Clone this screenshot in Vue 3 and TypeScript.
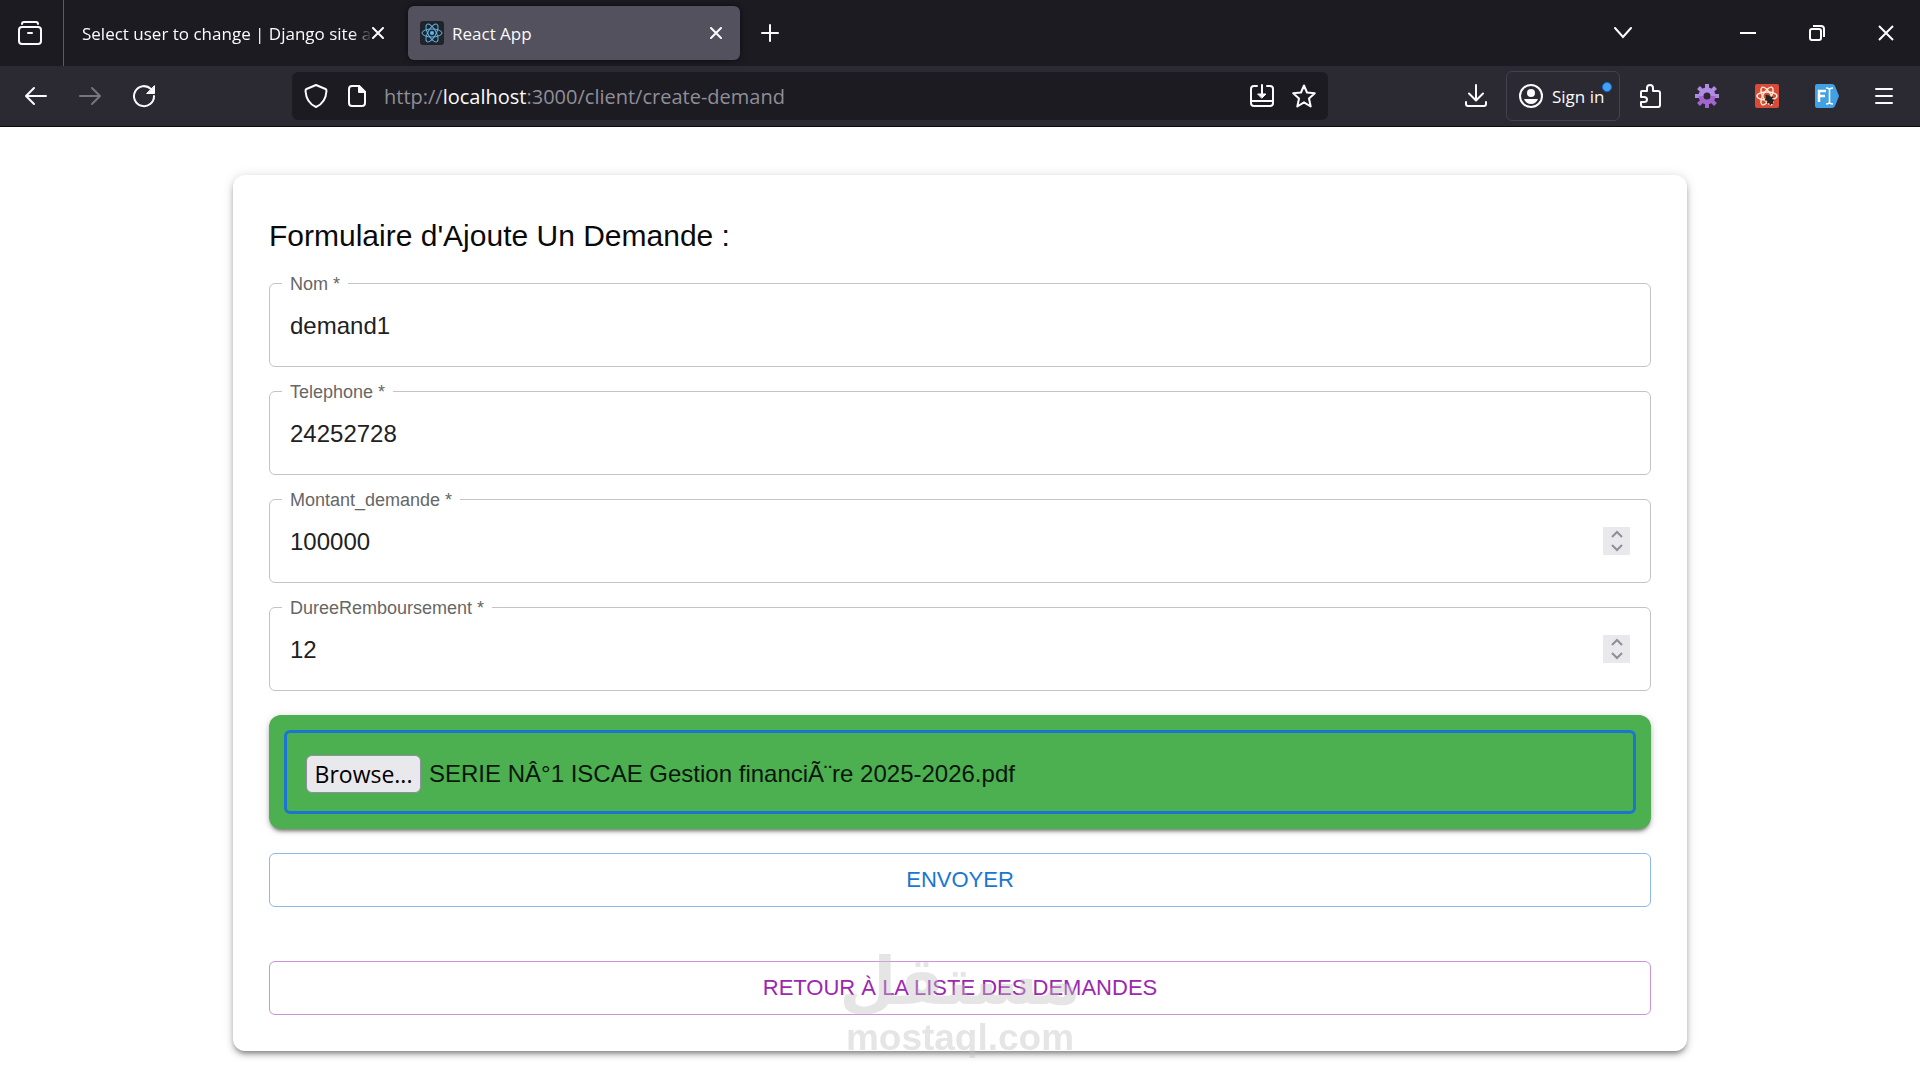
<script setup lang="ts">
import { ref } from 'vue'

interface Field {
  id: string
  label: string
  type: 'text' | 'number'
  value: string
}

const fields = ref<Field[]>([
  { id: 'nom', label: 'Nom', type: 'text', value: 'demand1' },
  { id: 'telephone', label: 'Telephone', type: 'text', value: '24252728' },
  { id: 'montant', label: 'Montant_demande', type: 'number', value: '100000' },
  { id: 'duree', label: 'DureeRemboursement', type: 'number', value: '12' },
])

const fileName = ref('SERIE NÂ°1 ISCAE Gestion financiÃ¨re 2025-2026.pdf')
const fileInput = ref<HTMLInputElement | null>(null)

function step(field: Field, amount: number) {
  field.value = String(Number(field.value) + amount)
}

function pickFile() {
  fileInput.value?.click()
}

function onFile(event: Event) {
  const file = (event.target as HTMLInputElement).files?.[0]
  if (file) fileName.value = file.name
}
</script>

<template>
  <div class="window">
    <header class="tabstrip">
      <button class="view-button" aria-label="Firefox View">
        <svg width="24" height="24" viewBox="0 0 24 24" fill="none" stroke="#fbfbfe" stroke-width="2" stroke-linecap="round">
          <path d="M4 3Q4 1 6 1H18Q20 1 20 3" />
          <rect x="1" y="6" width="22" height="17" rx="3" />
          <path d="M10 12H14" />
        </svg>
      </button>
      <div class="tab">
        <span class="tab-title faded">Select user to change | Django site a</span>
        <button class="tab-close" aria-label="Close tab">
          <svg width="12" height="12" viewBox="0 0 12 12" stroke="#fbfbfe" stroke-width="2" stroke-linecap="round"><path d="M1 1L11 11M11 1L1 11" /></svg>
        </button>
      </div>
      <div class="tab active">
        <svg class="favicon" width="24" height="24" viewBox="0 0 24 24" fill="none" stroke="#61b8ea">
          <rect width="24" height="24" rx="3" fill="#20232a" stroke="none" />
          <ellipse cx="12" cy="12" rx="10" ry="4" />
          <ellipse cx="12" cy="12" rx="10" ry="4" transform="rotate(60 12 12)" />
          <ellipse cx="12" cy="12" rx="10" ry="4" transform="rotate(120 12 12)" />
          <circle cx="12" cy="12" r="2" fill="#61b8ea" stroke="none" />
        </svg>
        <span class="tab-title">React App</span>
        <button class="tab-close" aria-label="Close tab">
          <svg width="12" height="12" viewBox="0 0 12 12" stroke="#fbfbfe" stroke-width="2" stroke-linecap="round"><path d="M1 1L11 11M11 1L1 11" /></svg>
        </button>
      </div>
      <button class="tool" aria-label="New tab">
        <svg width="18" height="18" viewBox="0 0 18 18" stroke="#fbfbfe" stroke-width="2" stroke-linecap="round"><path d="M9 1V17M1 9H17" /></svg>
      </button>
      <div class="strip-end">
        <button class="tool" aria-label="List all tabs">
          <svg width="18" height="12" viewBox="0 0 18 12" fill="none" stroke="#fbfbfe" stroke-width="2" stroke-linecap="round"><path d="M1 1L9 10L17 1" /></svg>
        </button>
        <div class="window-controls">
          <button aria-label="Minimize">
            <svg width="16" height="16" viewBox="0 0 16 16" stroke="#fff" stroke-width="2"><path d="M0 8H16" /></svg>
          </button>
          <button aria-label="Restore">
            <svg width="16" height="16" viewBox="0 0 16 16" fill="none" stroke="#fff" stroke-width="2"><rect x="1" y="4" width="11" height="11" rx="2" /><path d="M4 1H12Q15 1 15 4V12" /></svg>
          </button>
          <button aria-label="Close">
            <svg width="16" height="16" viewBox="0 0 16 16" stroke="#fff" stroke-width="2"><path d="M1 1L15 15M15 1L1 15" /></svg>
          </button>
        </div>
      </div>
    </header>

    <nav class="toolbar">
      <div class="tools">
        <button class="tool" aria-label="Back">
          <svg width="24" height="24" viewBox="0 0 24 24" fill="none" stroke="#fbfbfe" stroke-width="2" stroke-linecap="round" stroke-linejoin="round"><path d="M22 12H3M10 4L2 12L10 20" /></svg>
        </button>
        <button class="tool" aria-label="Forward" disabled>
          <svg width="24" height="24" viewBox="0 0 24 24" fill="none" stroke="#77767f" stroke-width="2" stroke-linecap="round" stroke-linejoin="round"><path d="M2 12H21M14 4L22 12L14 20" /></svg>
        </button>
        <button class="tool" aria-label="Reload">
          <svg width="24" height="24" viewBox="0 0 24 24" fill="none" stroke="#fbfbfe" stroke-width="2" stroke-linecap="round"><path d="M19 5A10 10 0 1 0 22 12" /><path d="M22.500 2V9.500H15Z" fill="#fbfbfe" stroke-width="1" stroke-linejoin="round" /></svg>
        </button>
      </div>

      <div class="urlbar">
        <div class="url-icons site">
          <svg width="24" height="24" viewBox="0 0 24 24" fill="none" stroke="#fbfbfe" stroke-width="2" stroke-linejoin="round"><path d="M12 1L21.500 5Q22.500 5.500 22.500 7C22 15 19 20 12 23C5 20 2 15 1.500 7Q1.500 5.500 2.500 5Z" /></svg>
          <svg width="18" height="24" viewBox="0 0 18 24" fill="none" stroke="#fbfbfe" stroke-width="2" stroke-linejoin="round"><path d="M4 2H11L17 8V19Q17 22 14 22H4Q1 22 1 19V5Q1 2 4 2Z" /><path d="M11 2V8H17Z" fill="#fbfbfe" /></svg>
        </div>
        <span class="url">http://<b>localhost</b>:3000/client/create-demand</span>
        <div class="url-icons">
          <svg width="24" height="24" viewBox="0 0 24 24" fill="none" stroke="#fbfbfe" stroke-width="2" stroke-linecap="round"><path d="M7 2H4Q1 2 1 5V19Q1 22 4 22H20Q23 22 23 19V5Q23 2 20 2H17M1 17H23M12 1V11" /><path d="M8 10H16L12 14Z" fill="#fbfbfe" stroke-width="1" stroke-linejoin="round" /></svg>
          <svg width="24" height="24" viewBox="0 0 24 24" fill="none" stroke="#fbfbfe" stroke-width="2" stroke-linejoin="round"><path d="M12 1.500L15 8.500L22.800 9.200L17 14.500L18.700 22.500L12 18.300L5.300 22.500L7 14.500L1.200 9.200L9 8.500Z" /></svg>
        </div>
      </div>

      <div class="tools">
        <button class="tool" aria-label="Downloads">
          <svg width="24" height="24" viewBox="0 0 24 24" fill="none" stroke="#fbfbfe" stroke-width="2" stroke-linecap="round" stroke-linejoin="round"><path d="M12 1V16M5 9.500L12 16.500L19 9.500M2 18V20Q2 22 4 22H20Q22 22 22 20V18" /></svg>
        </button>
        <button class="sign-in">
          <svg width="24" height="24" viewBox="0 0 24 24"><circle cx="12" cy="12" r="11" fill="none" stroke="#fbfbfe" stroke-width="2" /><circle cx="12" cy="9" r="4" fill="#fbfbfe" /><path d="M5 15H19Q17 20 12 20T5 15Z" fill="#fbfbfe" /></svg>
          <span>Sign in</span>
          <i class="dot"></i>
        </button>
        <button class="tool" aria-label="Extensions">
          <svg width="24" height="24" viewBox="0 0 24 24" fill="none" stroke="#fbfbfe" stroke-width="2" stroke-linejoin="round"><path d="M3 13V8Q3 7 4 7H9V4Q9 1 12 1T15 4V7H20Q22 7 22 9V21Q22 23 20 23H5Q3 23 3 21V18H6Q9 18 9 15.500T6 13Z" /></svg>
        </button>
        <button class="tool wide" aria-label="Gear extension">
          <svg width="24" height="24" viewBox="0 0 24 24" fill="none">
            <g stroke-width="4">
              <path d="M12 0V6M3.500 3.500L8 8M20.500 3.500L16 8M0 12H6M24 12H18" stroke="#b18ae6" />
              <path d="M12 24V18M3.500 20.500L8 16M20.500 20.500L16 16" stroke="#a565cf" />
            </g>
            <path d="M6 12A6 6 0 0 1 18 12" stroke="#b18ae6" stroke-width="5" />
            <path d="M6 12A6 6 0 0 0 18 12" stroke="#a565cf" stroke-width="5" />
          </svg>
        </button>
        <button class="tool wide" aria-label="React Developer Tools">
          <svg width="24" height="24" viewBox="0 0 24 24" fill="none" stroke="#fff0dc" stroke-width="1.400"><rect width="24" height="24" rx="2" fill="#d84b38" stroke="none" /><ellipse cx="12" cy="12" rx="10" ry="4" /><ellipse cx="12" cy="12" rx="10" ry="4" transform="rotate(60 12 12)" /><ellipse cx="12" cy="12" rx="10" ry="4" transform="rotate(120 12 12)" /><ellipse cx="14.500" cy="15.500" rx="3" ry="5" transform="rotate(-35 14.500 15.500)" fill="#2b2220" stroke="none" /><path d="M10 16L18 13M12 19L19 16M11 11L18 20M15 21L16 18" stroke="#2b2220" stroke-width="1.500" /></svg>
        </button>
        <button class="tool wide" aria-label="Form filler">
          <svg width="24" height="24" viewBox="0 0 24 24" fill="none" stroke="#fff" stroke-width="2"><path d="M2 0H17Q19 0 20 2L24 12L20 22Q19 24 17 24H2Q0 24 0 22V2Q0 0 2 0Z" fill="#41a1e4" stroke="none" /><path d="M4 18V7H11M4 12H10" stroke-width="2.500" /><path d="M11 4Q14.500 4 14.500 6V18Q14.500 20 11 20M18 4Q14.500 4 14.500 6M18 20Q14.500 20 14.500 18" stroke-width="1.600" /></svg>
        </button>
        <button class="tool" aria-label="Application menu">
          <svg width="18" height="18" viewBox="0 0 18 18" stroke="#fbfbfe" stroke-width="2" stroke-linecap="round"><path d="M1 2H17M1 9H17M1 16H17" /></svg>
        </button>
      </div>
    </nav>

    <main class="page">
      <form class="card" @submit.prevent>
        <h1>Formulaire d'Ajoute Un Demande :</h1>

        <div v-for="field in fields" :key="field.id" class="field">
          <label :for="field.id">{{ field.label }} *</label>
          <input :id="field.id" v-model="field.value" :type="field.type" />
          <div v-if="field.type === 'number'" class="stepper">
            <button type="button" aria-label="Augmenter" @click="step(field, 1)">
              <svg width="12" height="8" viewBox="0 0 12 8" fill="none" stroke="#8f8f94" stroke-width="2"><path d="M1 7L6 2L11 7" /></svg>
            </button>
            <button type="button" aria-label="Diminuer" @click="step(field, -1)">
              <svg width="12" height="8" viewBox="0 0 12 8" fill="none" stroke="#8f8f94" stroke-width="2"><path d="M1 1L6 6L11 1" /></svg>
            </button>
          </div>
        </div>

        <div class="upload">
          <div class="upload-box">
            <input ref="fileInput" type="file" aria-label="Fichier" hidden @change="onFile" />
            <button type="button" class="browse" @click="pickFile">Browse...</button>
            <span>{{ fileName }}</span>
          </div>
        </div>

        <button type="submit" class="action send">ENVOYER</button>
        <button type="button" class="action back">RETOUR À LA LISTE DES DEMANDES</button>

        <div class="watermark">
          <span class="mark-ar" lang="ar" dir="rtl">مستقل</span>
          <span class="mark-en">mostaql.com</span>
        </div>
      </form>
    </main>
  </div>
</template>

<style>
body {
  margin: 0;
  background: #fff;
}
</style>

<style scoped>
* {
  box-sizing: border-box;
}

.window {
  min-height: 100vh;
  display: flex;
  flex-direction: column;
  font-family: "Liberation Sans", Arial, sans-serif;
}

button {
  margin: 0;
  padding: 0;
  border: 0;
  background: none;
  font: inherit;
  color: inherit;
}

svg {
  display: block;
  flex: none;
}

.tabstrip,
.toolbar {
  display: flex;
  align-items: center;
  color: #fbfbfe;
  font-family: "Open Sans", "Noto Sans", sans-serif;
  font-size: 17px;
}

.tabstrip {
  height: 66px;
  gap: 6px;
  background: #1c1b22;
}

.view-button {
  width: 64px;
  height: 66px;
  padding-left: 18px;
  border-right: 1px solid #5b5a65;
}

.tab {
  width: 332px;
  height: 54px;
  padding: 0 12px;
  display: flex;
  align-items: center;
  gap: 8px;
  border-radius: 6px;
}

.tab.active {
  background: #53515e;
  box-shadow: 0 0 6px rgba(0, 0, 0, 0.6);
}

.tab-title {
  flex: 1;
  min-width: 0;
  white-space: nowrap;
}

.tab-title.faded {
  margin-right: -14px;
  mask-image: linear-gradient(to left, transparent, #000 20px);
}

.tab-close {
  width: 24px;
  height: 24px;
  display: grid;
  place-items: center;
}

.tool {
  width: 48px;
  height: 48px;
  display: grid;
  place-items: center;
}

.tool.wide {
  width: 54px;
}

.strip-end {
  margin-left: auto;
  display: flex;
  align-items: center;
  gap: 66px;
}

.window-controls {
  display: flex;
}

.window-controls button {
  width: 69px;
  height: 66px;
  display: grid;
  place-items: center;
}

.toolbar {
  height: 61px;
  padding: 0 12px;
  gap: 124px;
  background: #2b2a33;
  border-bottom: 1px solid #0c0c0d;
}

.tools {
  display: flex;
  align-items: center;
  gap: 6px;
}

.urlbar {
  flex: 1;
  min-width: 0;
  height: 48px;
  padding: 0 12px;
  display: flex;
  align-items: center;
  gap: 18px;
  border-radius: 6px;
  background: #1c1b22;
}

.url-icons {
  display: flex;
  gap: 18px;
}

.url-icons.site {
  gap: 20px;
}

.url {
  flex: 1;
  min-width: 0;
  overflow: hidden;
  white-space: nowrap;
  font-size: 20px;
  color: #8f8e98;
}

.url b {
  font-weight: 400;
  color: #fbfbfe;
}

.sign-in {
  position: relative;
  width: 114px;
  height: 50px;
  padding: 0 12px;
  display: flex;
  align-items: center;
  gap: 9px;
  border: 1px solid #42414d;
  border-radius: 6px;
  white-space: nowrap;
}

.dot {
  position: absolute;
  top: 10px;
  right: 7px;
  width: 10px;
  height: 10px;
  border-radius: 50%;
  background: #45a1f2;
  border: 1px solid #0b72d8;
}

.page {
  flex: 1;
  padding: 48px 233px 24px;
}

.card {
  position: relative;
  padding: 36px;
  display: flex;
  flex-direction: column;
  gap: 24px;
  border-radius: 12px;
  background: #fff;
  box-shadow: 0 4px 4px -2px rgba(0, 0, 0, 0.3), 0 4px 6px rgba(0, 0, 0, 0.18), 0 1px 12px rgba(0, 0, 0, 0.14);
}

h1 {
  height: 48px;
  margin: 0;
  font-size: 30px;
  font-weight: 400;
  line-height: 50px;
  color: #0a0a0a;
}

.field {
  position: relative;
  height: 84px;
  padding: 0 20px;
  display: flex;
  align-items: center;
  border: 1px solid #c4c4c4;
  border-radius: 6px;
}

.field label {
  position: absolute;
  top: -10px;
  left: 12px;
  padding: 0 8px;
  background: #fff;
  color: #666;
  font-size: 18px;
  line-height: 20px;
}

.field input {
  flex: 1;
  min-width: 0;
  height: 36px;
  padding: 2px 0 0;
  border: 0;
  outline: 0;
  background: none;
  color: #212121;
  font: inherit;
  font-size: 24px;
  appearance: textfield;
}

.field input::-webkit-inner-spin-button {
  appearance: none;
}

.stepper {
  width: 27px;
  height: 28px;
  background: #e9e9ed;
  display: flex;
  flex-direction: column;
}

.stepper button {
  flex: 1;
  display: grid;
  place-items: center;
}

.upload {
  padding: 15px;
  border-radius: 12px;
  background: #4caf50;
  box-shadow: 0 4px 3px -2px rgba(0, 0, 0, 0.3), 0 3px 4px rgba(0, 0, 0, 0.18), 0 1px 8px rgba(0, 0, 0, 0.14);
}

.upload-box {
  height: 84px;
  padding: 4px 19px 0;
  display: flex;
  align-items: center;
  gap: 8px;
  border: 3px solid #1976d2;
  border-radius: 6px;
  color: #0a170a;
  font-size: 24px;
}

.browse {
  width: 115px;
  height: 38px;
  border: 1px solid #8f8f9d;
  border-radius: 6px;
  background: #e9e9ed;
  color: #000;
  font-family: "Open Sans", "Noto Sans", sans-serif;
  font-size: 23px;
  line-height: 34px;
}

.action {
  height: 54px;
  border: 1px solid;
  border-radius: 6px;
  font-size: 22px;
}

.send {
  border-color: #8cbae8;
  color: #1976d2;
}

.back {
  margin-top: 30px;
  border-color: #cd93d7;
  color: #9c27b0;
}

.watermark {
  position: absolute;
  left: 0;
  right: 0;
  bottom: -7px;
  display: flex;
  flex-direction: column;
  align-items: center;
  font-weight: 700;
  color: #c2c2c2;
  opacity: 0.42;
  pointer-events: none;
}

.mark-ar {
  font-family: "DejaVu Sans", sans-serif;
  font-size: 66px;
  line-height: 72px;
}

.mark-en {
  font-size: 37px;
  line-height: 40px;
}
</style>
